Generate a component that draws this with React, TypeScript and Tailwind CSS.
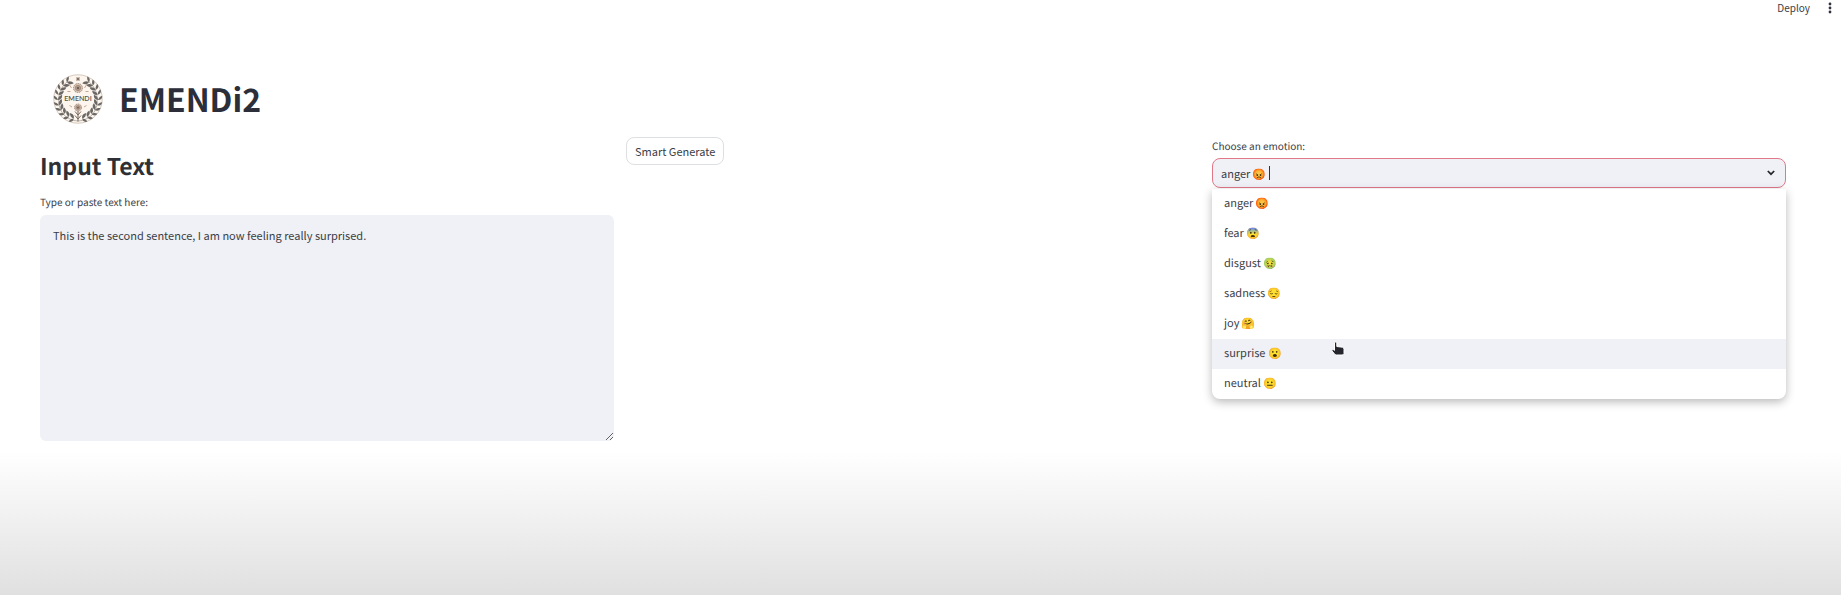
import { useState } from "react";

const emotions = [
  { name: "anger", emoji: "😡" },
  { name: "fear", emoji: "😨" },
  { name: "disgust", emoji: "🤢" },
  { name: "sadness", emoji: "😔" },
  { name: "joy", emoji: "🤗" },
  { name: "surprise", emoji: "😮" },
  { name: "neutral", emoji: "😐" },
];

const leafAngles = [12, 27, 42, 57, 72, 87, 102, 117, 132, 147];

function Branch() {
  return (
    <g>
      <path d="M50 94C22 92 8 70 12 44C14 32 20 22 30 14" fill="none" stroke="#8b847e" strokeWidth="1.2" />
      {leafAngles.map((a) => (
        <g key={a} transform={`rotate(${a} 50 50)`} fill="#6a6764">
          <path d="M50 90C44 90 41 86 40 81C46 81 50 84 50 90Z" />
          <path d="M50 90C45 91 42 95 41 98C47 99 50 95 50 90Z" />
        </g>
      ))}
    </g>
  );
}

function Flower({ cy, r }: { cy: number; r: number }) {
  return (
    <g>
      <circle cx="50" cy={cy} r={r} fill="#d9c5b5" stroke="#8d7768" strokeWidth="1.5" strokeDasharray="3 1.5" />
      <circle cx="50" cy={cy} r={r * 0.6} fill="#b39b8b" stroke="#8a7465" strokeWidth="1" />
      <circle cx="50" cy={cy} r={r * 0.25} fill="#63564f" />
    </g>
  );
}

function Logo() {
  return (
    <svg viewBox="0 0 100 100" className="size-[50px] shrink-0" role="img" aria-label="EMENDI emblem">
      <circle cx="50" cy="50" r="48.5" fill="#fcf6ef" stroke="#c9b8aa" strokeWidth="1.5" />
      <Branch />
      <g transform="translate(100 0) scale(-1 1)">
        <Branch />
      </g>
      <path d="M50 6v8M46 10h8M47 7l6 6M53 7l-6 6" stroke="#77675c" strokeWidth="1.6" />
      <path d="M32 20l5 8M68 20l-5 8M29 35h6M65 35h6M33 63l5 3M67 63l-5 3" stroke="#c9a68e" strokeWidth="2" />
      <path d="M50 70v25M50 82l-6-7M50 82l6-7M50 90l-6-7M50 90l6-7" fill="none" stroke="#77675c" strokeWidth="2" />
      <Flower cy={28} r={9} />
      <Flower cy={67} r={7} />
      <rect x="19" y="42" width="62" height="15" fill="#fcf6ef" />
      <text x="50" y="54.5" textAnchor="middle" fontSize="14" fontWeight="600" fill="#55584f" fontFamily="Lato, sans-serif">
        EMENDI
      </text>
    </svg>
  );
}

function Pointer() {
  return (
    <svg viewBox="0 0 14 16" className="pointer-events-none absolute top-0.5 left-[119px] h-4 w-3.5" aria-hidden="true">
      <path
        d="M3.5 1.5Q5 .2 5.8 1.8V5.5L11.5 6.2Q13.2 6.6 13 8.5V12.5Q12.8 14 11 14H5.5Q4.2 14 3.2 12.5L.8 9.8Q.8 8.3 2.3 8.6L3.5 9.4Z"
        fill="#25262d"
        stroke="#ffffff"
        strokeWidth="1"
      />
    </svg>
  );
}

export default function App() {
  const [text, setText] = useState("This is the second sentence, I am now feeling really surprised.");
  const [emotion, setEmotion] = useState("anger 😡 ");

  return (
    <div className="flex min-h-screen flex-col bg-white font-['Noto_Sans_CJK_SC','Noto_Color_Emoji',sans-serif] text-[11px] leading-5 text-[#3b3d45] [text-rendering:geometricPrecision]">
      <header className="flex h-4 items-center justify-end gap-3.5 pr-[5px]">
        <button type="button" className="text-[10px] leading-4">Deploy</button>
        <button type="button" aria-label="Main menu" className="flex w-3 justify-center">
          <svg viewBox="0 0 4 12" className="h-3 w-1" fill="#31333f">
            <circle cx="2" cy="2" r="1.4" />
            <circle cx="2" cy="6" r="1.4" />
            <circle cx="2" cy="10" r="1.4" />
          </svg>
        </button>
      </header>

      <main className="pt-[58px] pr-[55px] pl-10">
        <div className="flex h-[50px] items-center gap-4 pl-[13px]">
          <Logo />
          <h1 className="text-[32px] leading-10 font-bold text-[#2c2e39]">EMENDi2</h1>
        </div>

        <div className="grid grid-cols-3 gap-3 pt-[13px]">
          <section className="flex flex-col pt-2.5">
            <h2 className="text-[23px] leading-9 font-semibold text-[#2f3036]">Input Text</h2>
            <label htmlFor="source" className="pt-[11px] pb-[5px] text-[10px] leading-4">Type or paste text here:</label>
            <textarea
              id="source"
              value={text}
              onChange={(e) => setText(e.target.value)}
              className="block h-[226px] w-full rounded-md bg-[#eff1f6] px-[13px] py-2.5 leading-5 outline-none"
            />
          </section>

          <section>
            <button type="button" className="h-7 rounded-lg border border-[#dedfe2] px-2">
              Smart Generate
            </button>
          </section>

          <section className="flex flex-col">
            <label htmlFor="emotion" className="pt-px pb-1 text-[10px] leading-4">Choose an emotion:</label>
            <div className="relative">
              <div className="flex h-[30px] items-center rounded-lg border border-[#e0788a] bg-[#eff1f6] pr-2.5 pl-2">
                <input
                  id="emotion"
                  role="combobox"
                  aria-expanded="true"
                  aria-controls="emotion-list"
                  value={emotion}
                  onChange={(e) => setEmotion(e.target.value)}
                  className="field-sizing-content bg-transparent caret-transparent outline-none"
                />
                <span className="h-3.5 w-px bg-[#31333f]" />
                <svg viewBox="0 0 8 6" className="ml-auto h-1.5 w-2" fill="none" stroke="#25262d" strokeWidth="1.7">
                  <path d="M.8 1L4 4.2L7.2 1" />
                </svg>
              </div>
              <ul
                id="emotion-list"
                role="listbox"
                aria-label="Emotions"
                className="absolute inset-x-0 top-full mt-px rounded-b-lg bg-white shadow-[0_3px_10px_rgba(0,0,0,0.28)]"
              >
                {emotions.map(({ name, emoji }) => (
                  <li
                    key={name}
                    role="option"
                    aria-selected={name === "surprise"}
                    onClick={() => setEmotion(`${name} ${emoji} `)}
                    className="relative flex h-[30px] cursor-pointer items-center px-3 pb-0.5 last:rounded-b-lg aria-selected:bg-[#f0f1f6]"
                  >
                    {name} {emoji}
                    {name === "surprise" && <Pointer />}
                  </li>
                ))}
              </ul>
            </div>
          </section>
        </div>
      </main>

      <div className="mt-2.5 min-h-36 flex-1 bg-linear-to-b from-white to-[#e0e0e0]" />
    </div>
  );
}
